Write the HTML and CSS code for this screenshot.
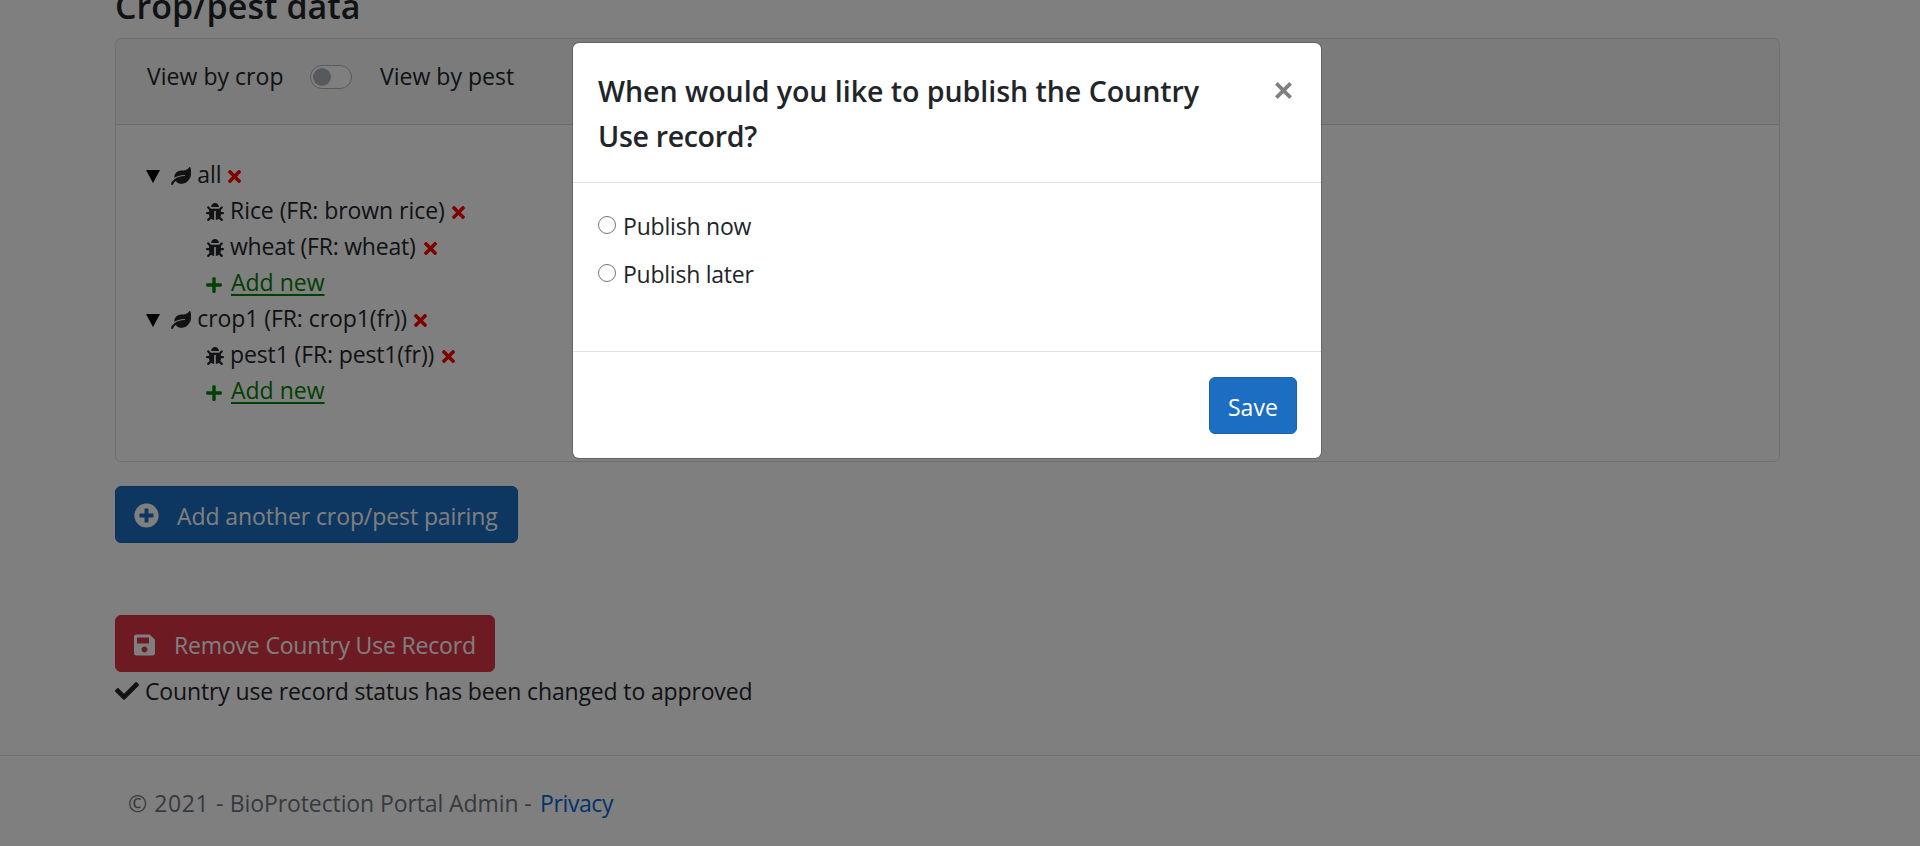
FILE: index.html
```html
<!DOCTYPE html>
<html lang="en">
<head>
<meta charset="utf-8">
<title>BioProtection Portal Admin</title>
<link rel="stylesheet" href="styles.css">
</head>
<body>
<svg class="defs" aria-hidden="true">
  <symbol id="leaf" viewBox="0 0 576 512"><path d="M546.2 9.7c-5.6-12.5-21.6-13-28.3-1.2C486.9 62.4 431.4 96 368 96h-80C182 96 96 182 96 288c0 7 .8 13.7 1.5 20.5C161.3 262.8 253.4 224 384 224c8.8 0 16 7.2 16 16s-7.2 16-16 16C132.6 256 26 410.1 2.4 468c-6.6 16.3 1.2 34.9 17.5 41.6 16.4 6.8 35-1.1 41.8-17.3 1.5-3.6 20.9-47.9 71.9-90.6 32.4 43.9 94 85.8 174.9 77.2C465.5 467.5 576 326.7 576 154.3c0-50.2-10.8-102.2-29.8-144.6z"/></symbol>
  <symbol id="bug" viewBox="0 0 512 512"><path d="M511.988 288.9c-.478 17.43-15.217 31.1-32.653 31.1H424v16c0 21.864-4.882 42.584-13.6 61.145l60.228 60.228c12.496 12.497 12.496 32.758 0 45.255-12.498 12.497-32.759 12.496-45.256 0l-54.736-54.736C345.886 467.965 314.351 480 280 480V236c0-6.627-5.373-12-12-12h-24c-6.627 0-12 5.373-12 12v244c-34.351 0-65.886-12.035-90.636-32.108l-54.736 54.736c-12.498 12.497-32.759 12.496-45.256 0-12.496-12.497-12.496-32.758 0-45.255l60.228-60.228C92.882 378.584 88 357.864 88 336v-16H32.666C15.23 320 .491 306.33.013 288.9-.484 270.816 14.028 256 32 256h56v-58.745l-46.628-46.628c-12.496-12.497-12.496-32.758 0-45.255 12.498-12.497 32.758-12.497 45.256 0L141.255 160h229.489l54.627-54.627c12.498-12.497 32.758-12.497 45.256 0 12.496 12.497 12.496 32.758 0 45.255L424 197.255V256h56c17.972 0 32.484 14.816 31.988 32.9zM257 0c-61.856 0-112 50.144-112 112h224C369 50.144 318.856 0 257 0z"/></symbol>
  <symbol id="times" viewBox="0 0 352 512"><path d="M242.72 256l100.07-100.07c12.28-12.28 12.28-32.19 0-44.48l-22.24-22.24c-12.28-12.28-32.19-12.28-44.48 0L176 189.28 75.93 89.21c-12.28-12.28-32.19-12.28-44.48 0L9.21 111.45c-12.28 12.28-12.28 32.19 0 44.48L109.28 256 9.21 356.07c-12.28 12.28-12.28 32.19 0 44.48l22.24 22.24c12.28 12.28 32.2 12.28 44.48 0L176 322.72l100.07 100.07c12.28 12.28 32.2 12.28 44.48 0l22.24-22.24c12.28-12.28 12.28-32.19 0-44.48L242.72 256z"/></symbol>
  <symbol id="plus" viewBox="0 0 448 512"><path d="M416 208H272V64c0-17.67-14.33-32-32-32h-32c-17.67 0-32 14.33-32 32v144H32c-17.67 0-32 14.33-32 32v32c0 17.67 14.33 32 32 32h144v144c0 17.67 14.33 32 32 32h32c17.67 0 32-14.33 32-32V304h144c17.67 0 32-14.33 32-32v-32c0-17.67-14.33-32-32-32z"/></symbol>
  <symbol id="plus-circle" viewBox="0 0 512 512"><path d="M256 8C119 8 8 119 8 256s111 248 248 248 248-111 248-248S393 8 256 8zm144 276c0 6.6-5.4 12-12 12h-92v92c0 6.6-5.4 12-12 12h-56c-6.6 0-12-5.4-12-12v-92h-92c-6.6 0-12-5.4-12-12v-56c0-6.6 5.4-12 12-12h92v-92c0-6.6 5.4-12 12-12h56c6.6 0 12 5.4 12 12v92h92c6.6 0 12 5.4 12 12v56z"/></symbol>
  <symbol id="save" viewBox="0 0 448 512"><path d="M433.941 129.941l-83.882-83.882A48 48 0 0 0 316.118 32H48C21.49 32 0 53.49 0 80v352c0 26.51 21.49 48 48 48h352c26.51 0 48-21.49 48-48V163.882a48 48 0 0 0-14.059-33.941zM224 416c-35.346 0-64-28.654-64-64 0-35.346 28.654-64 64-64s64 28.654 64 64c0 35.346-28.654 64-64 64zm96-304.52V212c0 6.627-5.373 12-12 12H76c-6.627 0-12-5.373-12-12V108c0-6.627 5.373-12 12-12h228.52c3.183 0 6.235 1.264 8.485 3.515l3.48 3.48A11.996 11.996 0 0 1 320 111.48z"/></symbol>
  <symbol id="check" viewBox="0 0 512 512"><path d="M173.898 439.404l-166.4-166.4c-9.997-9.997-9.997-26.206 0-36.204l36.203-36.204c9.997-9.998 26.207-9.998 36.204 0L192 312.69 432.095 72.596c9.997-9.997 26.207-9.997 36.204 0l36.203 36.204c9.997 9.997 9.997 26.206 0 36.204l-294.4 294.401c-9.998 9.997-26.207 9.997-36.204-.001z"/></symbol>
  <symbol id="caret" viewBox="0 0 14 13"><path d="M0 0h14L7 13z"/></symbol>
</svg>

<main class="container">
  <h4 class="heading">Crop/pest data</h4>
  <section class="card">
    <div class="card-header">
      <span class="view-crop">View by crop</span>
      <span class="switch"><span class="knob"></span></span>
      <span class="view-pest">View by pest</span>
    </div>
    <div class="card-body">
      <div class="row crop"><svg class="caret"><use href="#caret"/></svg><svg class="leaf"><use href="#leaf"/></svg><span class="all">all</span><svg class="times"><use href="#times"/></svg></div>
      <div class="row pest"><svg class="bug"><use href="#bug"/></svg><span class="rice">Rice (FR: brown rice)</span><svg class="times"><use href="#times"/></svg></div>
      <div class="row pest"><svg class="bug"><use href="#bug"/></svg><span class="wheat">wheat (FR: wheat)</span><svg class="times"><use href="#times"/></svg></div>
      <div class="row pest"><svg class="plus"><use href="#plus"/></svg><a class="add">Add new</a></div>
      <div class="row crop"><svg class="caret"><use href="#caret"/></svg><svg class="leaf"><use href="#leaf"/></svg><span class="crop1">crop1 (FR: crop1(fr))</span><svg class="times"><use href="#times"/></svg></div>
      <div class="row pest"><svg class="bug"><use href="#bug"/></svg><span class="pest1">pest1 (FR: pest1(fr))</span><svg class="times"><use href="#times"/></svg></div>
      <div class="row pest"><svg class="plus"><use href="#plus"/></svg><a class="add">Add new</a></div>
    </div>
  </section>
  <button class="btn btn-primary btn-pairing"><svg class="icon-circle"><use href="#plus-circle"/></svg><span>Add another crop/pest pairing</span></button>
  <button class="btn btn-danger"><svg class="icon-save"><use href="#save"/></svg><span>Remove Country Use Record</span></button>
  <div class="status"><svg class="icon-check"><use href="#check"/></svg><span>Country use record status has been changed to approved</span></div>
</main>
<footer class="footer"><span class="copyright"><span class="year">© 2021 -</span> BioProtection Portal Admin -</span><a class="privacy">Privacy</a></footer>

<div class="backdrop">
  <div class="modal">
    <div class="modal-header">
      <h5 class="modal-title"><span class="title-first">When would you like to publish the Country</span> <span class="title-second">Use record?</span></h5>
      <svg class="close" viewBox="0 0 16 16"><path d="M1.3 1.3l13.4 13.4M14.7 1.3L1.3 14.7"/></svg>
    </div>
    <div class="modal-body">
      <label class="option now"><span class="radio"></span><span>Publish now</span></label>
      <label class="option later"><span class="radio"></span><span>Publish later</span></label>
    </div>
    <div class="modal-footer"><button class="btn btn-primary btn-save"><span>Save</span></button></div>
  </div>
</div>
</body>
</html>
```
FILE: styles.css
```css
* { box-sizing: border-box; }
html, body { height: 846px; overflow: hidden; }
body {
  margin: 0;
  background: #fff;
  color: #212529;
  font: 23px/36px "Open Sans", "Noto Sans", sans-serif;
  white-space: nowrap;
}
svg { fill: currentColor; flex: none; display: block; }
.defs { position: absolute; width: 0; height: 0; }

.container { width: 1665px; height: 755px; margin-left: 115px; }
.heading { margin: 0 0 12px; height: 26px; font-size: 34px; font-weight: 600; line-height: 13px; letter-spacing: .04px; }

.card { height: 424px; border: 1px solid rgba(0,0,0,.125); border-radius: 6px; }
.card-header {
  display: flex;
  height: 86px;
  padding: 19px 31px 0;
  background: rgba(0,0,0,.03);
  border-bottom: 1px solid rgba(0,0,0,.125);
}
.view-crop { width: 163px; letter-spacing: .03px; }
.view-pest { letter-spacing: .02px; }
.switch {
  width: 42px;
  height: 24px;
  margin: 7px 28px 0 0;
  padding: 2px;
  border: 1px solid #adb5bd;
  border-radius: 12px;
  background: #fff;
}
.knob { display: block; width: 18px; height: 18px; border-radius: 9px; background: #adb5bd; }

.card-body { padding: 31px 30px; }
.row { display: flex; height: 36px; }
.pest { padding-left: 60px; }
.caret { width: 14px; height: 13px; margin: 14px 11px 0 0; color: #000; }
.leaf { width: 20.25px; height: 18px; margin: 11px 6px 0 0; }
.bug { width: 18px; height: 18px; margin: 11px 6px 0 0; }
.plus { width: 16px; height: 18px; margin: 12px 9px 0 0; color: green; }
.times { width: 13px; height: 19px; margin-top: 11px; color: red; }
.all { width: 31px; }
.rice { width: 222px; letter-spacing: -.056px; }
.wheat { width: 194px; letter-spacing: -.218px; }
.crop1 { width: 217px; letter-spacing: -.075px; }
.pest1 { width: 212px; letter-spacing: -.13px; }
.add { color: green; letter-spacing: 0; text-decoration: underline; text-decoration-thickness: 2px; text-underline-offset: 3px; text-decoration-skip-ink: none; }

.btn {
  display: flex;
  height: 57px;
  padding: 11px 18px 9px;
  border: 1px solid;
  border-radius: 6px;
  color: #fff;
  font: inherit;
}
.btn-primary { background: #1b6ec2; border-color: #1861ac; }
.btn-danger { width: 380px; margin-top: 72px; background: #dc3545; border-color: #dc3545; letter-spacing: -.176px; }
.btn-pairing { width: 403px; margin-top: 24px; letter-spacing: -.09px; }
.icon-circle { width: 25px; height: 25px; margin: 5px 18px 0 0; }
.icon-save { width: 21px; height: 24px; margin: 6px 19px 0 0; }
.status { display: flex; padding-top: 1px; letter-spacing: -.146px; }
.icon-check { width: 24px; height: 24px; margin: 6px 6px 0 0; }

.footer {
  display: flex;
  height: 91px;
  padding: 29px 128px 0;
  border-top: 1px solid rgba(0,0,0,.125);
  color: #6c757d;
}
.copyright { width: 412px; letter-spacing: -.1px; }
.year { letter-spacing: .6px; }
.privacy { color: #0366d6; letter-spacing: -.388px; }

.backdrop { position: absolute; inset: 0; padding: 43px 599px 0 573px; background: rgba(0,0,0,.5); }
.modal { height: 415px; background: #fff; border-radius: 6px; box-shadow: 0 0 0 1px rgba(0,0,0,.2); }
.modal-header { display: flex; justify-content: space-between; height: 140px; padding: 25px 29px 0 25px; border-bottom: 1px solid #dee2e6; }
.modal-title { margin: 0; width: 640px; font-size: 28.6px; font-weight: 600; line-height: 45px; white-space: normal; }
.title-first { letter-spacing: -.06px; }
.title-second { letter-spacing: -.35px; }
.close { width: 17px; height: 17px; margin-top: 14px; fill: none; stroke: #7f7f7f; stroke-width: 3.4; }
.modal-body { height: 168px; padding: 25px 25px 0; }
.option { display: flex; margin-bottom: 12px; }
.radio { width: 18px; height: 18px; margin: 8px 7px 0 0; border: 1.5px solid #767676; border-radius: 50%; }
.now { letter-spacing: -.2px; }
.later { letter-spacing: -.24px; }
.modal-footer { display: flex; justify-content: flex-end; padding: 25px 24px 0; height: 107px; border-top: 1px solid #dee2e6; }
.btn-save { width: 88px; }
```
